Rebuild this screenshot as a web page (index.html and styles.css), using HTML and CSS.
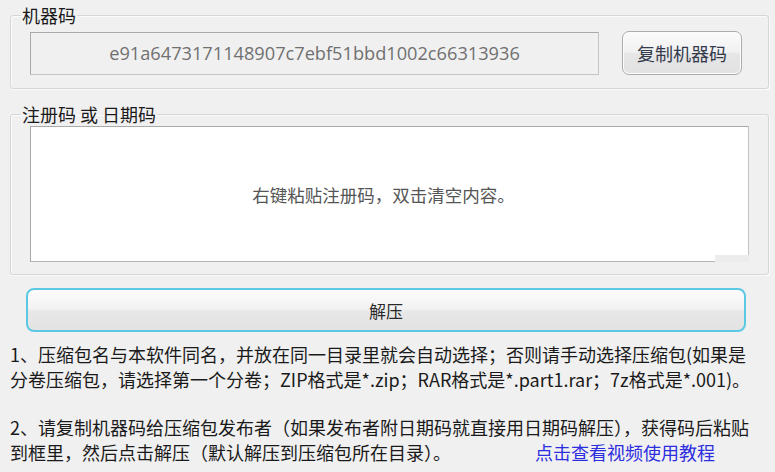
FILE: index.html
```html
<!DOCTYPE html>
<html lang="zh-CN">
<head>
<meta charset="utf-8">
<title>解压</title>
<link rel="stylesheet" href="styles.css">
</head>
<body>
<div class="app">
  <fieldset class="group group-machine">
    <legend class="group-title">机器码</legend>
    <div class="machine-row">
      <div class="code-field">e91a6473171148907c7ebf51bbd1002c66313936</div>
      <button class="copy-btn" type="button">复制机器码</button>
    </div>
  </fieldset>
  <fieldset class="group group-reg">
    <legend class="group-title">注册码 或 日期码</legend>
    <div class="reg-box">
      <span class="reg-hint">右键粘贴注册码，双击清空内容。</span>
      <span class="grip"></span>
    </div>
  </fieldset>
  <button class="extract-btn" type="button">解压</button>
  <div class="notes">
    <p class="note">1、压缩包名与本软件同名，并放在同一目录里就会自动选择；否则请手动选择压缩包(如果是<br>分卷压缩包，请选择第一个分卷；ZIP格式是*.zip；RAR格式是*.part1.rar；7z格式是*.001)。</p>
    <p class="note">2、请复制机器码给压缩包发布者（如果发布者附日期码就直接用日期码解压），获得码后粘贴<br>到框里，然后点击解压（默认解压到压缩包所在目录）。<a class="tutorial" href="#">点击查看视频使用教程</a></p>
  </div>
</div>
</body>
</html>
```
FILE: styles.css
```css
html, body {
  margin: 0;
  padding: 0;
  background: #f0f0f0;
}
body {
  font-family: "Noto Sans CJK SC", sans-serif;
  font-size: 18px;
  color: #1a1a1a;
  width: 775px;
  height: 472px;
  overflow: hidden;
}
.app {
  display: flex;
  flex-direction: column;
  padding-top: 4px;
}
.group {
  margin: 0 6px 0 10px;
  border: 1px solid #d6d6d6;
  border-radius: 3px;
  box-shadow: inset 1px 1px 0 #fbfbfb, 1px 1px 0 #fbfbfb;
  min-width: 0;
}
.group-title {
  margin-left: -9px;
  padding: 0 1px;
  line-height: 22px;
  font-size: 18px;
  color: #1a1a1a;
}
.group-machine {
  padding: 5px 26px 13px 19px;
}
.machine-row {
  display: flex;
  align-items: center;
  gap: 23px;
}
.code-field {
  width: 567px;
  height: 41px;
  border: 1px solid #a9a9a9;
  border-bottom-color: #c4c4c4;
  border-right-color: #c4c4c4;
  background: #f0f0f0;
  color: #707070;
  display: flex;
  align-items: center;
  justify-content: center;
  font-family: "Open Sans", sans-serif;
  font-size: 18.2px;
}
.copy-btn {
  width: 120px;
  height: 44px;
  border: 1px solid #acacac;
  border-radius: 7px;
  background: linear-gradient(#fbfbfb 0%, #f1f1f1 48%, #e6e6e6 52%, #e2e2e2 100%);
  font-family: "Noto Sans CJK SC", sans-serif;
  font-size: 18px;
  color: #343a4c;
  padding: 0;
  box-shadow: inset 0 0 0 1px #fcfcfc;
}
.group-reg {
  margin-top: 14px;
  padding: 1px 19px 12px 19px;
}
.reg-box {
  position: relative;
  height: 134px;
  background: #fff;
  border: 1px solid #a9a9a9;
  border-bottom-color: #b5b5b5;
  border-right-color: #c4c4c4;
  display: flex;
  align-items: center;
  justify-content: center;
}
.reg-hint {
  font-family: "Noto Sans CJK SC", sans-serif;
  font-size: 17.5px;
  color: #555;
  margin-right: 12px;
}
.grip {
  position: absolute;
  right: -1px;
  bottom: -1px;
  width: 34px;
  height: 7px;
  background: #ececec;
}
.extract-btn {
  margin: 13px 0 0 26px;
  width: 720px;
  height: 44px;
  border: 2px solid #5cc9e4;
  border-radius: 8px;
  background: linear-gradient(#fcfcfc 0%, #f3f3f3 45%, #e7e7e7 55%, #e3e3e3 100%);
  font-family: "Noto Sans CJK SC", sans-serif;
  font-size: 17px;
  color: #2a2a2a;
  padding: 0;
}
.notes {
  margin: 10px 0 0 10px;
  font-family: "Noto Sans CJK SC", sans-serif;
  font-size: 18px;
  line-height: 25px;
  color: #1a1a1a;
  white-space: nowrap;
}
.note {
  margin: 0 0 23px 0;
}
.tutorial {
  color: #2d2de0;
  text-decoration: none;
  margin-left: 84px;
}
```
